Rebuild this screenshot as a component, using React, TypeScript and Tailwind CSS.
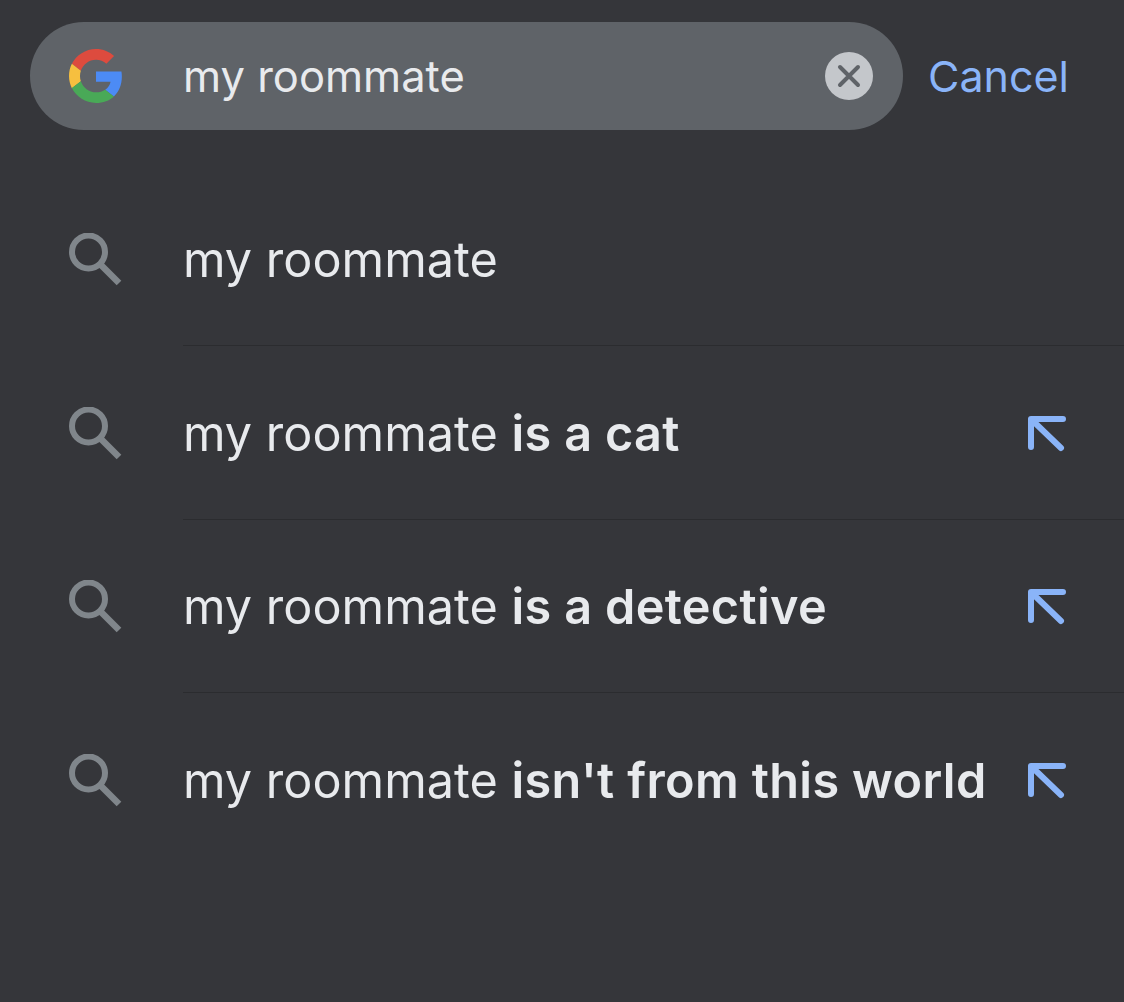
const rows = [
  { bold: '', arrow: false },
  { bold: 'is a cat', arrow: true },
  { bold: 'is a detective', arrow: true },
  { bold: "isn't from this world", arrow: true },
];

function GoogleG() {
  return (
    <svg viewBox="0 0 48 48" className="h-[54px] w-[54px] shrink-0">
      <path fill="#dd4b3e" d="M24 9.5c3.54 0 6.71 1.22 9.21 3.6l6.85-6.85C35.9 2.38 30.47 0 24 0 14.62 0 6.51 5.38 2.56 13.22l7.98 6.19C12.43 13.72 17.74 9.5 24 9.5z" />
      <path fill="#4c8bf5" d="M46.98 24.55c0-1.57-.15-3.09-.38-4.55H24v9.02h12.94c-.58 2.96-2.26 5.48-4.78 7.18l7.73 6c4.51-4.18 7.09-10.36 7.09-17.65z" />
      <path fill="#f6bf3f" d="M10.53 28.59c-.48-1.45-.76-2.99-.76-4.59s.27-3.14.76-4.59l-7.98-6.19C.92 16.46 0 20.12 0 24c0 3.88.92 7.54 2.56 10.78l7.97-6.19z" />
      <path fill="#49a957" d="M24 48c6.48 0 11.93-2.13 15.89-5.81l-7.73-6c-2.15 1.45-4.92 2.3-8.16 2.3-6.26 0-11.57-4.22-13.47-9.91l-7.98 6.19C6.51 42.62 14.62 48 24 48z" />
    </svg>
  );
}

function SearchIcon() {
  return (
    <svg viewBox="0 0 54 54" className="h-[54px] w-[54px] shrink-0" fill="none" stroke="#80868b" strokeWidth="6">
      <circle cx="19.5" cy="19" r="16.5" />
      <path d="M31 31l19 19" strokeWidth="6.5" />
    </svg>
  );
}

function ArrowIcon() {
  return (
    <svg viewBox="0 0 40 38" className="mt-[3px] h-[38px] w-[40px] shrink-0" fill="none" stroke="#8ab4f8" strokeWidth="6" strokeLinecap="round" strokeLinejoin="round">
      <path d="M4 32V4h32" />
      <path d="M6 6l28 27" />
    </svg>
  );
}

export default function App() {
  return (
    <div className="h-[1002px] w-[1124px] overflow-hidden bg-[#35363a] font-['Inter',sans-serif] text-[#e8eaed]">
      <div className="flex items-center pl-[30px] pt-[22px]">
        <div className="flex h-[108px] w-[873px] items-center rounded-full bg-[#5f6368] pl-[39px] pr-[30px]">
          <GoogleG />
          <span className="ml-[60px] flex-1 pt-[2px] text-[43.5px] leading-none">my roommate</span>
          <div className="flex h-[48px] w-[48px] items-center justify-center rounded-full bg-[#c4c7cb]">
            <svg viewBox="0 0 24 24" className="h-[24px] w-[24px]" fill="none" stroke="#5f6368" strokeWidth="4" strokeLinecap="round">
              <path d="M3 3l18 18M21 3L3 21" />
            </svg>
          </div>
        </div>
        <span className="ml-[25px] text-[43px] leading-none text-[#8ab4f8]">Cancel</span>
      </div>
      <div className="mt-[42.5px]">
        {rows.map((row, i) => (
          <div key={i} className="flex h-[173.5px] items-stretch pl-[69px]">
            <div className="flex items-center pt-[2px]">
              <SearchIcon />
            </div>
            <div className={`ml-[60px] flex flex-1 items-center justify-between pr-[57px] ${i < 3 ? 'border-b border-[#2b2c2f]' : ''}`}>
              <span className="whitespace-nowrap pt-[4px] text-[48.6px] leading-none">
                my roommate {row.bold && <b className="font-semibold tracking-[0.35px]">{row.bold}</b>}
              </span>
              {row.arrow && <ArrowIcon />}
            </div>
          </div>
        ))}
      </div>
    </div>
  );
}
